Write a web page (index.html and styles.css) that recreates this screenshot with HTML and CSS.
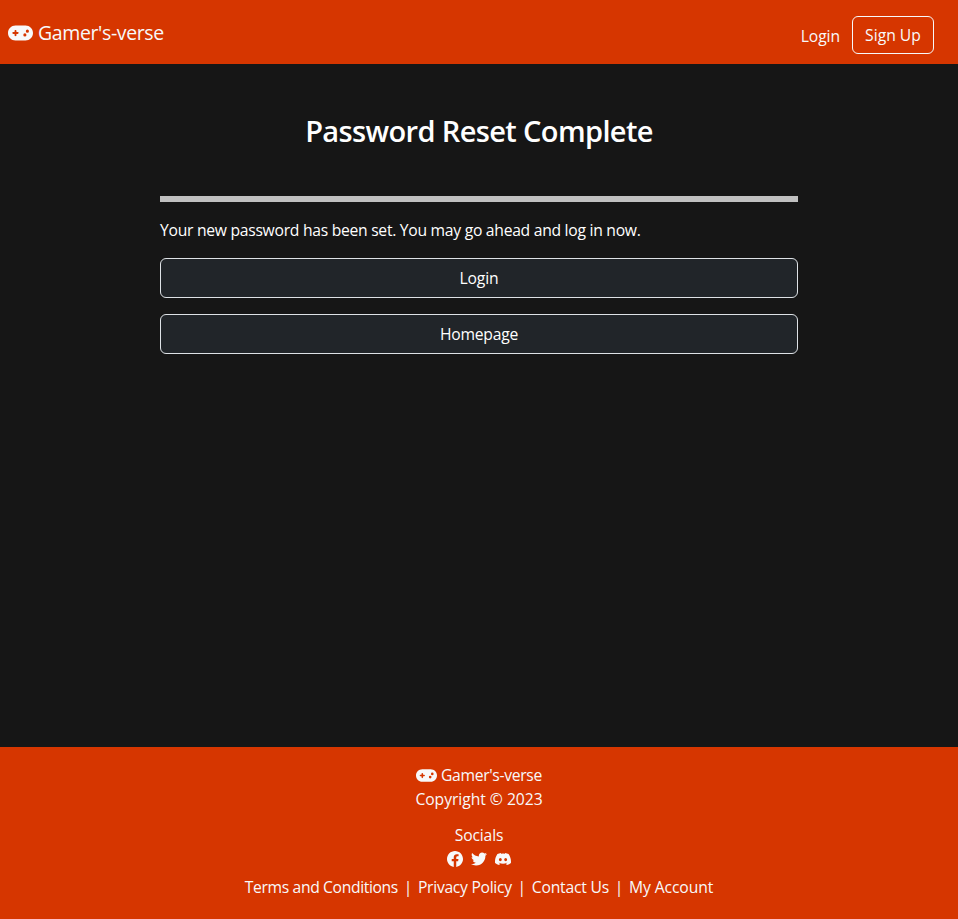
FILE: index.html
```html
<!DOCTYPE html>
<html lang="en">
<head>
<meta charset="utf-8">
<title>Gamer's-verse</title>
<link rel="stylesheet" href="styles.css">
</head>
<body>
<svg class="sprite" aria-hidden="true">
  <symbol id="gamepad" viewBox="0 0 640 512"><path d="M192 64C86 64 0 150 0 256S86 448 192 448H448c106 0 192-86 192-192s-86-192-192-192H192zM496 168a40 40 0 1 1 0 80 40 40 0 1 1 0-80zM392 304a40 40 0 1 1 80 0 40 40 0 1 1 -80 0zM168 200c0-13.3 10.7-24 24-24s24 10.7 24 24v32h32c13.3 0 24 10.7 24 24s-10.7 24-24 24H216v32c0 13.3-10.7 24-24 24s-24-10.7-24-24V280H136c-13.3 0-24-10.7-24-24s10.7-24 24-24h32V200z"/></symbol>
</svg>
<header class="navbar">
  <a class="brand"><svg class="brand-icon"><use href="#gamepad"/></svg><span>Gamer's-verse</span></a>
  <nav class="nav-actions">
    <a class="nav-login">Login</a>
    <a class="btn-signup">Sign Up</a>
  </nav>
</header>
<main class="content">
  <h1 class="title">Password Reset Complete</h1>
  <hr class="rule">
  <p class="message">Your new password has been set. You may go ahead and log in now.</p>
  <a class="btn">Login</a>
  <a class="btn btn-home">Homepage</a>
</main>
<footer class="footer">
  <div class="line foot-brand"><svg class="foot-icon"><use href="#gamepad"/></svg><span>Gamer's-verse</span></div>
  <div class="line copyright">Copyright © 2023</div>
  <div class="line socials-title">Socials</div>
  <div class="socials">
    <svg viewBox="8 8 496 496"><path d="M504 256C504 119 393 8 256 8S8 119 8 256c0 123.78 90.69 226.38 209.25 245V327.69h-63V256h63v-54.64c0-62.15 37-96.48 93.67-96.48 27.14 0 55.52 4.84 55.52 4.84v61h-31.28c-30.8 0-40.41 19.12-40.41 38.73V256h68.78l-11 71.69h-57.78V501C413.31 482.38 504 379.78 504 256z"/></svg>
    <svg viewBox="0 0 512 512"><path d="M459.37 151.716c.325 4.548.325 9.097.325 13.645 0 138.72-105.583 298.558-298.558 298.558-59.452 0-114.68-17.219-161.137-47.106 8.447.974 16.568 1.299 25.34 1.299 49.055 0 94.213-16.568 130.274-44.832-46.132-.975-84.792-31.188-98.112-72.772 6.498.974 12.995 1.624 19.818 1.624 9.421 0 18.843-1.3 27.614-3.573-48.081-9.747-84.143-51.98-84.143-102.985v-1.299c13.969 7.797 30.214 12.67 47.431 13.319-28.264-18.843-46.781-51.005-46.781-87.391 0-19.492 5.197-37.36 14.294-52.954 51.655 63.675 129.3 105.258 216.365 109.807-1.624-7.797-2.599-15.918-2.599-24.04 0-57.828 46.782-104.934 104.934-104.934 30.213 0 57.502 12.67 76.67 33.137 23.715-4.548 46.456-13.32 66.599-25.34-7.798 24.366-24.366 44.833-46.132 57.827 21.117-2.273 41.584-8.122 60.426-16.243-14.292 20.791-32.161 39.308-52.628 54.253z"/></svg>
    <svg viewBox="0 0 16 16"><path d="M13.545 2.907a13.227 13.227 0 0 0-3.257-1.011.05.05 0 0 0-.052.025c-.141.25-.297.577-.406.833a12.19 12.19 0 0 0-3.658 0 8.258 8.258 0 0 0-.412-.833.051.051 0 0 0-.052-.025c-1.125.194-2.22.534-3.257 1.011a.041.041 0 0 0-.021.018C.356 6.024-.213 9.047.066 12.032c.001.014.01.028.021.037a13.276 13.276 0 0 0 3.995 2.02.05.05 0 0 0 .056-.019c.308-.42.582-.863.818-1.329a.05.05 0 0 0-.01-.059.051.051 0 0 0-.018-.011 8.875 8.875 0 0 1-1.248-.595.05.05 0 0 1-.02-.066.051.051 0 0 1 .015-.019c.084-.063.168-.129.248-.195a.05.05 0 0 1 .051-.007c2.619 1.196 5.454 1.196 8.041 0a.052.052 0 0 1 .053.007c.08.066.164.132.248.195a.051.051 0 0 1-.004.085 8.254 8.254 0 0 1-1.249.594.05.05 0 0 0-.03.03.052.052 0 0 0 .003.041c.24.465.515.909.817 1.329a.05.05 0 0 0 .056.019 13.235 13.235 0 0 0 4.001-2.02.049.049 0 0 0 .021-.037c.334-3.451-.559-6.449-2.366-9.106a.034.034 0 0 0-.02-.019Zm-8.198 7.307c-.789 0-1.438-.724-1.438-1.612 0-.889.637-1.613 1.438-1.613.807 0 1.45.73 1.438 1.613 0 .888-.637 1.612-1.438 1.612Zm5.316 0c-.788 0-1.438-.724-1.438-1.612 0-.889.637-1.613 1.438-1.613.807 0 1.451.73 1.438 1.613 0 .888-.631 1.612-1.438 1.612Z"/></svg>
  </div>
  <div class="line links">
    <a class="link-terms">Terms and Conditions</a><span class="sep">|</span><a class="link-privacy">Privacy Policy</a><span class="sep">|</span><a class="link-contact">Contact Us</a><span class="sep">|</span><a class="link-account">My Account</a>
  </div>
</footer>
</body>
</html>
```
FILE: styles.css
```css
* { box-sizing: border-box; }
body {
  margin: 0;
  min-height: 919px;
  display: flex;
  flex-direction: column;
  background: #161616;
  color: #fff;
  font: 15.7px/24px "Segoe UI", "Open Sans", "Noto Sans", sans-serif;
}
a { color: inherit; text-decoration: none; white-space: nowrap; }
svg { fill: #f8f9fa; display: block; flex: none; }
.sprite { display: none; }

.navbar {
  height: 64px;
  padding: 0 24px 0 8px;
  display: flex;
  justify-content: space-between;
  background: #d63600;
  color: #f8f9fa;
}
.brand { display: flex; align-items: center; gap: 5px; height: 66px; font-size: 19.5px; letter-spacing: -0.38px; }
.brand-icon { width: 25px; height: 20px; }
.nav-actions { display: flex; align-items: flex-start; padding-top: 16px; gap: 12px; }
.nav-login { padding-top: 8px; letter-spacing: -0.1px; }
.btn-signup {
  width: 82px;
  height: 38px;
  border: 1px solid #f8f9fa;
  border-radius: 6px;
  line-height: 37px;
  text-align: center;
}

.content { width: 638px; margin: 0 auto; flex: 1; }
.title { margin: 48px 0 0; font-size: 29px; line-height: 38px; font-weight: 600; letter-spacing: -0.63px; text-align: center; white-space: nowrap; }
.rule { height: 6px; margin: 46px 0 16px; border: 0; background: #c0c0c0; }
.message { margin: 0 0 16px; letter-spacing: -0.28px; white-space: nowrap; }
.btn {
  display: block;
  height: 40px;
  margin-bottom: 16px;
  border: 1px solid #dee2e6;
  border-radius: 6px;
  background: #212529;
  line-height: 38px;
  letter-spacing: -0.1px;
  text-align: center;
}
.btn-home { letter-spacing: -0.25px; }

.footer { height: 172px; padding-top: 16px; background: #d63600; color: #f8f9fa; text-align: center; }
.line { white-space: nowrap; }
.foot-brand { display: flex; align-items: center; justify-content: center; gap: 4px; letter-spacing: -0.32px; }
.foot-icon { width: 21px; height: 17px; }
.copyright { letter-spacing: -0.05px; }
.socials-title { margin-top: 12px; letter-spacing: -0.17px; }
.socials { display: flex; justify-content: center; gap: 8px; padding: 4px 0 8px; }
.socials svg { width: 16px; height: 16px; }
.links { display: flex; justify-content: center; }
.link-terms { letter-spacing: -0.37px; }
.link-privacy { letter-spacing: -0.3px; }
.link-contact { letter-spacing: -0.2px; }
.link-account { letter-spacing: -0.12px; }
.sep { width: 20px; }
```
